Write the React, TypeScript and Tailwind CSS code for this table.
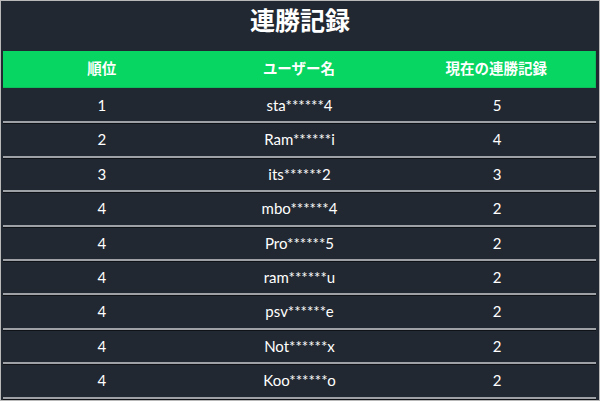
import React from "react";

const rows: [string, string, string][] = [
  ["1", "sta******4", "5"],
  ["2", "Ram******i", "4"],
  ["3", "its******2", "3"],
  ["4", "mbo******4", "2"],
  ["4", "Pro******5", "2"],
  ["4", "ram******u", "2"],
  ["4", "psv******e", "2"],
  ["4", "Not******x", "2"],
  ["4", "Koo******o", "2"],
];

export default function App() {
  return (
    <div
      className="w-[600px] h-[401px] overflow-hidden bg-[#222831] border border-[#b9b9b9] text-white"
      style={{ fontFamily: 'Lato, "Noto Sans CJK JP", sans-serif' }}
    >
      <h1 className="h-[38px] pt-[2px] text-center text-[25px] font-bold leading-[34px]">連勝記録</h1>
      <div className="mt-[12px] ml-[2px] w-[593px]">
        <div className="h-[37px] bg-[#07d662] border-r border-b border-[#0cbf5a] grid grid-cols-3 items-center text-[14.5px] font-bold">
          <div className="text-center">順位</div>
          <div className="text-center">ユーザー名</div>
          <div className="text-center">現在の連勝記録</div>
        </div>
        <div className="pt-px">
          {rows.map((r, i) => (
            <div
              key={i}
              className="h-[34.4px] grid grid-cols-3 items-center text-[15px] border-b-2 border-[#9ea2a7] shadow-[0_1px_0_#0f1217]"
            >
              <div className="text-center">{r[0]}</div>
              <div className="text-center">{r[1]}</div>
              <div className="text-center">{r[2]}</div>
            </div>
          ))}
        </div>
      </div>
    </div>
  );
}
